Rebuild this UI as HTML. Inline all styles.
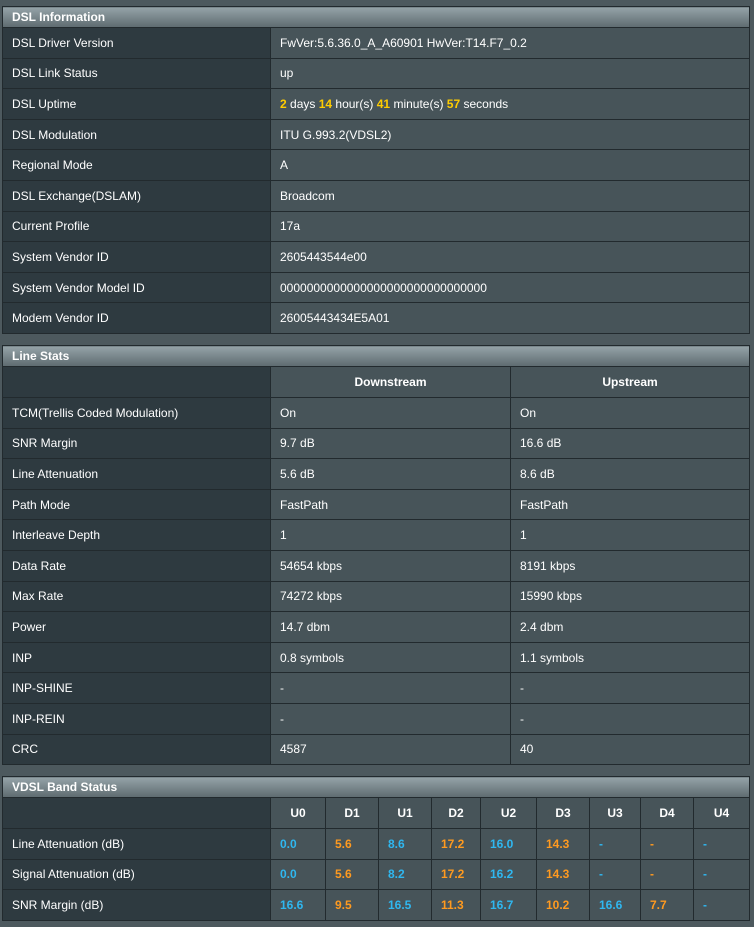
<!DOCTYPE html>
<html><head><style>
body{margin:0;background:#4d595e;width:754px;height:927px;overflow:hidden;font-family:"Liberation Sans",Arial,sans-serif;font-size:12px;color:#fff}
table{position:absolute;left:2px;width:748px;border-collapse:collapse;table-layout:fixed}
td,th{border:1px solid #222a2e;padding:0 0 0 9px;text-align:left;font-weight:normal}
th.h{height:20px;background:linear-gradient(#95a3a8,#5e6b70);font-weight:bold;border-color:#222a2e}
td.l{background:#2e3a40}
td.v{background:#475459}
tr.r td{height:29.6px}
tr.hd td{height:30px;font-weight:bold;text-align:center;padding:0;background:#475459}
tr.hd td.l{background:#2e3a40}
.y{color:#ffcc00;font-weight:bold}
.b{color:#2fb7f0;font-weight:bold}.o{color:#ff9a1f;font-weight:bold}
#t3 td.v{padding-left:9px}
</style></head><body>
<table style="top:6px">
<colgroup><col style="width:268px"><col></colgroup>
<tr><th class="h" colspan="2">DSL Information</th></tr>
<tr class="r"><td class="l">DSL Driver Version</td><td class="v">FwVer:5.6.36.0_A_A60901 HwVer:T14.F7_0.2</td></tr>
<tr class="r"><td class="l">DSL Link Status</td><td class="v">up</td></tr>
<tr class="r"><td class="l">DSL Uptime</td><td class="v"><span class="y">2</span> days <span class="y">14</span> hour(s) <span class="y">41</span> minute(s) <span class="y">57</span> seconds</td></tr>
<tr class="r"><td class="l">DSL Modulation</td><td class="v">ITU G.993.2(VDSL2)</td></tr>
<tr class="r"><td class="l">Regional Mode</td><td class="v">A</td></tr>
<tr class="r"><td class="l">DSL Exchange(DSLAM)</td><td class="v">Broadcom</td></tr>
<tr class="r"><td class="l">Current Profile</td><td class="v">17a</td></tr>
<tr class="r"><td class="l">System Vendor ID</td><td class="v">2605443544e00</td></tr>
<tr class="r"><td class="l">System Vendor Model ID</td><td class="v">0000000000000000000000000000000</td></tr>
<tr class="r"><td class="l">Modem Vendor ID</td><td class="v">26005443434E5A01</td></tr>
</table>
<table style="top:345px">
<colgroup><col style="width:268px"><col style="width:240px"><col></colgroup>
<tr><th class="h" colspan="3">Line Stats</th></tr>
<tr class="hd"><td class="l"></td><td>Downstream</td><td>Upstream</td></tr>
<tr class="r"><td class="l">TCM(Trellis Coded Modulation)</td><td class="v">On</td><td class="v">On</td></tr>
<tr class="r"><td class="l">SNR Margin</td><td class="v">9.7 dB</td><td class="v">16.6 dB</td></tr>
<tr class="r"><td class="l">Line Attenuation</td><td class="v">5.6 dB</td><td class="v">8.6 dB</td></tr>
<tr class="r"><td class="l">Path Mode</td><td class="v">FastPath</td><td class="v">FastPath</td></tr>
<tr class="r"><td class="l">Interleave Depth</td><td class="v">1</td><td class="v">1</td></tr>
<tr class="r"><td class="l">Data Rate</td><td class="v">54654 kbps</td><td class="v">8191 kbps</td></tr>
<tr class="r"><td class="l">Max Rate</td><td class="v">74272 kbps</td><td class="v">15990 kbps</td></tr>
<tr class="r"><td class="l">Power</td><td class="v">14.7 dbm</td><td class="v">2.4 dbm</td></tr>
<tr class="r"><td class="l">INP</td><td class="v">0.8 symbols</td><td class="v">1.1 symbols</td></tr>
<tr class="r"><td class="l">INP-SHINE</td><td class="v">-</td><td class="v">-</td></tr>
<tr class="r"><td class="l">INP-REIN</td><td class="v">-</td><td class="v">-</td></tr>
<tr class="r"><td class="l">CRC</td><td class="v">4587</td><td class="v">40</td></tr>
</table>
<table id="t3" style="top:776px">
<colgroup><col style="width:268px"><col style="width:55px"><col style="width:53px"><col style="width:53px"><col style="width:49px"><col style="width:56px"><col style="width:53px"><col style="width:51px"><col style="width:53px"><col></colgroup>
<tr><th class="h" colspan="10">VDSL Band Status</th></tr>
<tr class="hd"><td class="l"></td><td>U0</td><td>D1</td><td>U1</td><td>D2</td><td>U2</td><td>D3</td><td>U3</td><td>D4</td><td>U4</td></tr>
<tr class="r"><td class="l">Line Attenuation (dB)</td><td class="v b">0.0</td><td class="v o">5.6</td><td class="v b">8.6</td><td class="v o">17.2</td><td class="v b">16.0</td><td class="v o">14.3</td><td class="v b">-</td><td class="v o">-</td><td class="v b">-</td></tr>
<tr class="r"><td class="l">Signal Attenuation (dB)</td><td class="v b">0.0</td><td class="v o">5.6</td><td class="v b">8.2</td><td class="v o">17.2</td><td class="v b">16.2</td><td class="v o">14.3</td><td class="v b">-</td><td class="v o">-</td><td class="v b">-</td></tr>
<tr class="r"><td class="l">SNR Margin (dB)</td><td class="v b">16.6</td><td class="v o">9.5</td><td class="v b">16.5</td><td class="v o">11.3</td><td class="v b">16.7</td><td class="v o">10.2</td><td class="v b">16.6</td><td class="v o">7.7</td><td class="v b">-</td></tr>
</table>
</body></html>
